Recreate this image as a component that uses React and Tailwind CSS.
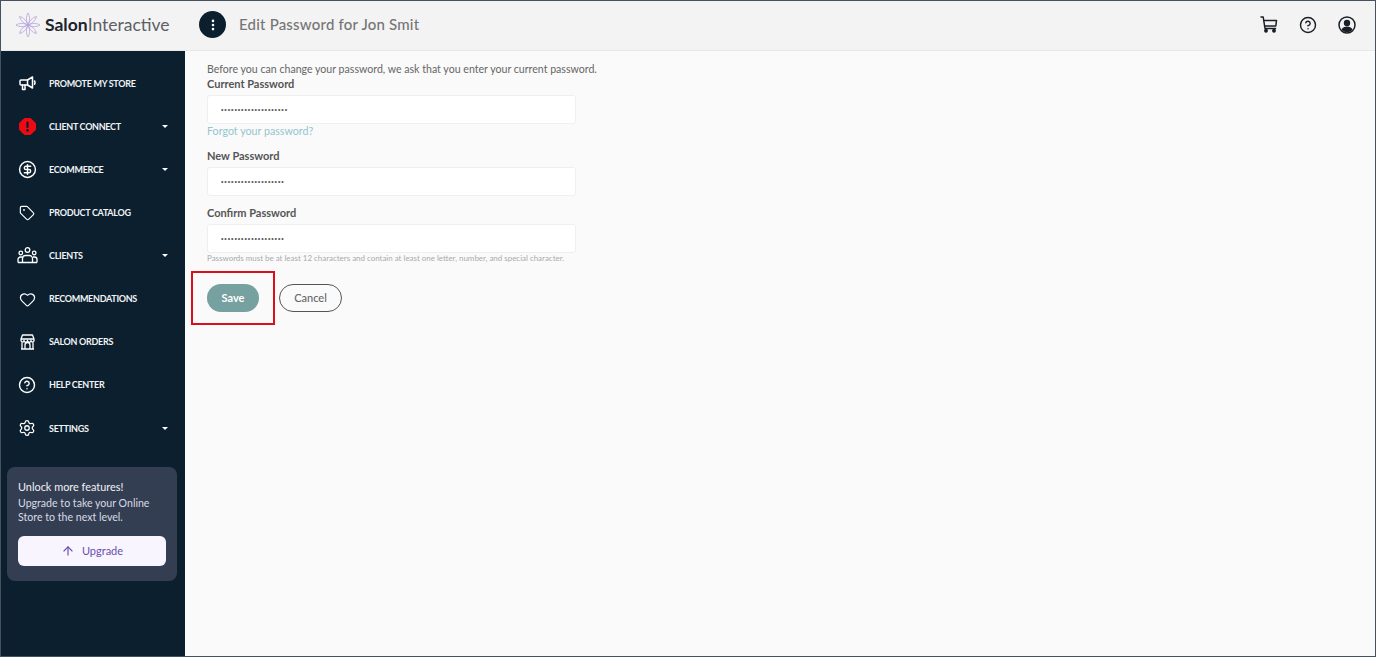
import React from 'react';
import { ArrowUp, CircleDollarSign, CircleHelp, EllipsisVertical, Heart, Settings, Tag } from 'lucide-react';

const AlertIcon = () => (
  <svg width="17" height="17" viewBox="0 0 17 17">
    <path d="M5.3 .5h6.4l4.8 4.8v6.4l-4.8 4.8H5.3L.5 11.700V5.300z" fill="#ee0a12" stroke="#ee0a12" strokeLinejoin="round" />
    <rect x="7.400" y="3.500" width="2.200" height="6.500" rx="1" fill="#0c1f2e" />
    <circle cx="8.500" cy="12.400" r="1.300" fill="#0c1f2e" />
  </svg>
);

const MegaphoneIcon = () => (
  <svg width="17" height="15" viewBox="0 0 17 15" fill="none" stroke="white" strokeWidth="1.500" strokeLinejoin="round" strokeLinecap="round">
    <path d="M2 4h6.500L13.500 1v11L8.500 9H2a1 1 0 0 1-1-1V5a1 1 0 0 1 1-1z" />
    <path d="M3.500 9v4.500h2.500V9M8.500 4v5M15.500 5c.6 1 .6 2.300 0 3.300" />
  </svg>
);

const StoreIcon = () => (
  <svg width="15" height="16" viewBox="0 0 15 16" fill="none" stroke="white" strokeWidth="1.300" strokeLinejoin="round">
    <path d="M2.500 1h10l1.500 4H1zM1 5v1.500a1.500 1.500 0 0 0 3 0 1.750 1.750 0 0 0 3.500 0 1.750 1.750 0 0 0 3.500 0 1.500 1.500 0 0 0 3 0V5" />
    <path d="M2 8.500V15h11V8.500M5 15v-4a2.500 2.500 0 0 1 5 0v4M1 15h13" />
  </svg>
);

const CartIcon = () => (
  <svg width="18" height="17" viewBox="0 0 18 17" fill="none" stroke="#1a1f26" strokeWidth="1.500" strokeLinejoin="round" strokeLinecap="round">
    <path d="M1 1h2.200l1.800 11.500h10.500" />
    <path d="M3.800 4.500h12.700l-.7 5.500H4.600" />
    <circle cx="6" cy="14.800" r="1.200" fill="#1a1f26" />
    <circle cx="14" cy="14.800" r="1.200" fill="#1a1f26" />
  </svg>
);

const ClientsIcon = () => (
  <svg width="21" height="17" viewBox="0 0 21 17" fill="none" stroke="white" strokeWidth="1.300">
    <circle cx="10.500" cy="3" r="2.300" />
    <circle cx="3.800" cy="6" r="1.800" />
    <circle cx="17.200" cy="6" r="1.800" />
    <path d="M1 15.500v-3a2.500 2.500 0 0 1 2.500-2.500h1.500M20 15.500v-3a2.500 2.500 0 0 0-2.500-2.500H16" />
    <path d="M5.500 15.500v-4a3 3 0 0 1 3-3h4a3 3 0 0 1 3 3v4zM1 15.500h19" />
  </svg>
);

const UserCircleIcon = () => (
  <svg width="18" height="18" viewBox="0 0 18 18">
    <circle cx="9" cy="9" r="8" fill="none" stroke="#1a1f26" strokeWidth="1.500" />
    <circle cx="9" cy="7" r="3.200" fill="#1a1f26" />
    <path d="M3.500 14c1-2.600 3-3.500 5.500-3.500s4.500.9 5.500 3.500a8 8 0 0 1-11 0z" fill="#1a1f26" />
  </svg>
);

const Logo = () => (
  <svg width="26" height="26" viewBox="0 0 26 26" fill="none" stroke="#b5a3dc" strokeWidth="0.800">
    {[0, 45, 90, 135, 180, 225, 270, 315].map(a => (
      <path key={a} d="M13 13C10.800 9.500 11 4 13 1c2 3 2.200 8.500 0 12z" transform={`rotate(${a} 13 13)`} />
    ))}
  </svg>
);

const navItems = [
  { label: 'Promote my store', icon: <MegaphoneIcon /> },
  { label: 'Client connect', icon: <AlertIcon />, caret: true },
  { label: 'Ecommerce', icon: <CircleDollarSign size={19} strokeWidth={1.8} />, caret: true },
  { label: 'Product catalog', icon: <Tag size={16} strokeWidth={1.7} /> },
  { label: 'Clients', icon: <ClientsIcon />, caret: true },
  { label: 'Recommendations', icon: <Heart size={17} strokeWidth={1.7} /> },
  { label: 'Salon orders', icon: <StoreIcon /> },
  { label: 'Help center', icon: <CircleHelp size={18} strokeWidth={1.9} /> },
  { label: 'Settings', icon: <Settings size={18} strokeWidth={1.7} />, caret: true },
];

const fieldClass = "block w-[369px] h-[29px] bg-white border border-[#efefef] rounded-[3px] pl-[13px] text-[7px] tracking-[0.9px] text-[#555] font-['Liberation_Sans',sans-serif] outline-none";

const Field = ({ label, value }) => (
  <div>
    <label className="block mb-[4px] text-[11px] leading-[14px] font-bold text-[#555]">{label}</label>
    <input type="password" readOnly defaultValue={value} className={fieldClass} />
  </div>
);

export default function App() {
  return (
    <div className="w-[1376px] h-[657px] flex flex-col overflow-hidden bg-[#fafafa] border border-[#46535f] font-['Lato',sans-serif]">
      <header className="h-[50px] shrink-0 flex items-center pb-[2px] bg-[#f3f3f3] border-b border-[#e8e8e8]">
        <div className="w-[184px] h-[48px] shrink-0 flex items-center pl-[14px] gap-[4px]">
          <Logo />
          <span className="text-[17.500px] text-[#5c5f66] leading-none">
            <span className="font-bold text-[#20242c]">Salon</span>Interactive
          </span>
        </div>
        <div className="ml-[14px] w-[27px] h-[27px] rounded-full bg-[#0c1f2e] flex items-center justify-center text-white">
          <EllipsisVertical size={14} strokeWidth={2.5} />
        </div>
        <h1 className="ml-[13px] text-[15px] font-medium text-[#757575] tracking-[0.2px]">Edit Password for Jon Smit</h1>
        <div className="ml-auto flex items-center gap-[21px] pr-[19px] text-[#1a1f26]">
          <CartIcon />
          <CircleHelp size={18} strokeWidth={1.9} />
          <UserCircleIcon />
        </div>
      </header>
      <div className="flex flex-1 min-h-0">
        <aside className="w-[184px] shrink-0 bg-[#0c1f2e] pt-[11px]">
          <nav>
            {navItems.map(item => (
              <div key={item.label} className="h-[43.100px] flex items-center text-white">
                <div className="w-[48px] shrink-0 flex justify-center pl-[4px]">{item.icon}</div>
                <span className="text-[9px] tracking-[-0.3px] font-bold uppercase text-[#f0f3f5]">{item.label}</span>
                {item.caret && <span className="ml-auto mr-[17px] w-0 h-0 border-x-[3.500px] border-x-transparent border-t-[3.500px] border-t-white" />}
              </div>
            ))}
          </nav>
          <div className="mt-[17px] ml-[6px] w-[170px] h-[114px] rounded-[8px] bg-[#343e53] pt-[13px] px-[11px]">
            <p className="text-[10.900px] leading-[14px] text-[#f0f1f5]">Unlock more features!</p>
            <p className="mt-[2px] text-[10.600px] leading-[14px] text-[#d8dbe4]">Upgrade to take your Online Store to the next level.</p>
            <button className="mt-[12px] w-[148px] h-[30px] rounded-[6px] bg-[#f9f5ff] flex items-center justify-center gap-[7px] text-[#6a4fb0] text-[11px]">
              <ArrowUp size={14} strokeWidth={2} />
              Upgrade
            </button>
          </div>
        </aside>
        <main className="flex-1 pl-[22px] pt-[11px] text-[#555]">
          <p className="mb-[1px] text-[10.600px] leading-[14px] text-[#666]">Before you can change your password, we ask that you enter your current password.</p>
          <Field label="Current Password" value="aaaaaaaaaaaaaaaaaaaa" />
          <a className="block text-[10.700px] leading-[14px] text-[#95c4cf]">Forgot your password?</a>
          <div className="mt-[11px]">
            <Field label="New Password" value="aaaaaaaaaaaaaaaaaaa" />
          </div>
          <div className="mt-[10px]">
            <Field label="Confirm Password" value="aaaaaaaaaaaaaaaaaaa" />
          </div>
          <p className="text-[7.950px] leading-[10px] text-[#aaa]">Passwords must be at least 12 characters and contain at least one letter, number, and special character.</p>
          <div className="mt-[21px] flex items-center gap-[20px]">
            <div className="relative">
              <button className="block w-[52px] h-[28px] rounded-full bg-[#77a0a0] text-white text-[11px] font-bold">Save</button>
              <div className="absolute -left-[16px] -top-[13px] w-[84px] h-[54px] border-[2.500px] border-[#d9101c]" />
            </div>
            <button className="w-[63px] h-[28px] rounded-full border-[1.500px] border-[#555] text-[#666] text-[11px] font-medium">Cancel</button>
          </div>
        </main>
      </div>
    </div>
  );
}
